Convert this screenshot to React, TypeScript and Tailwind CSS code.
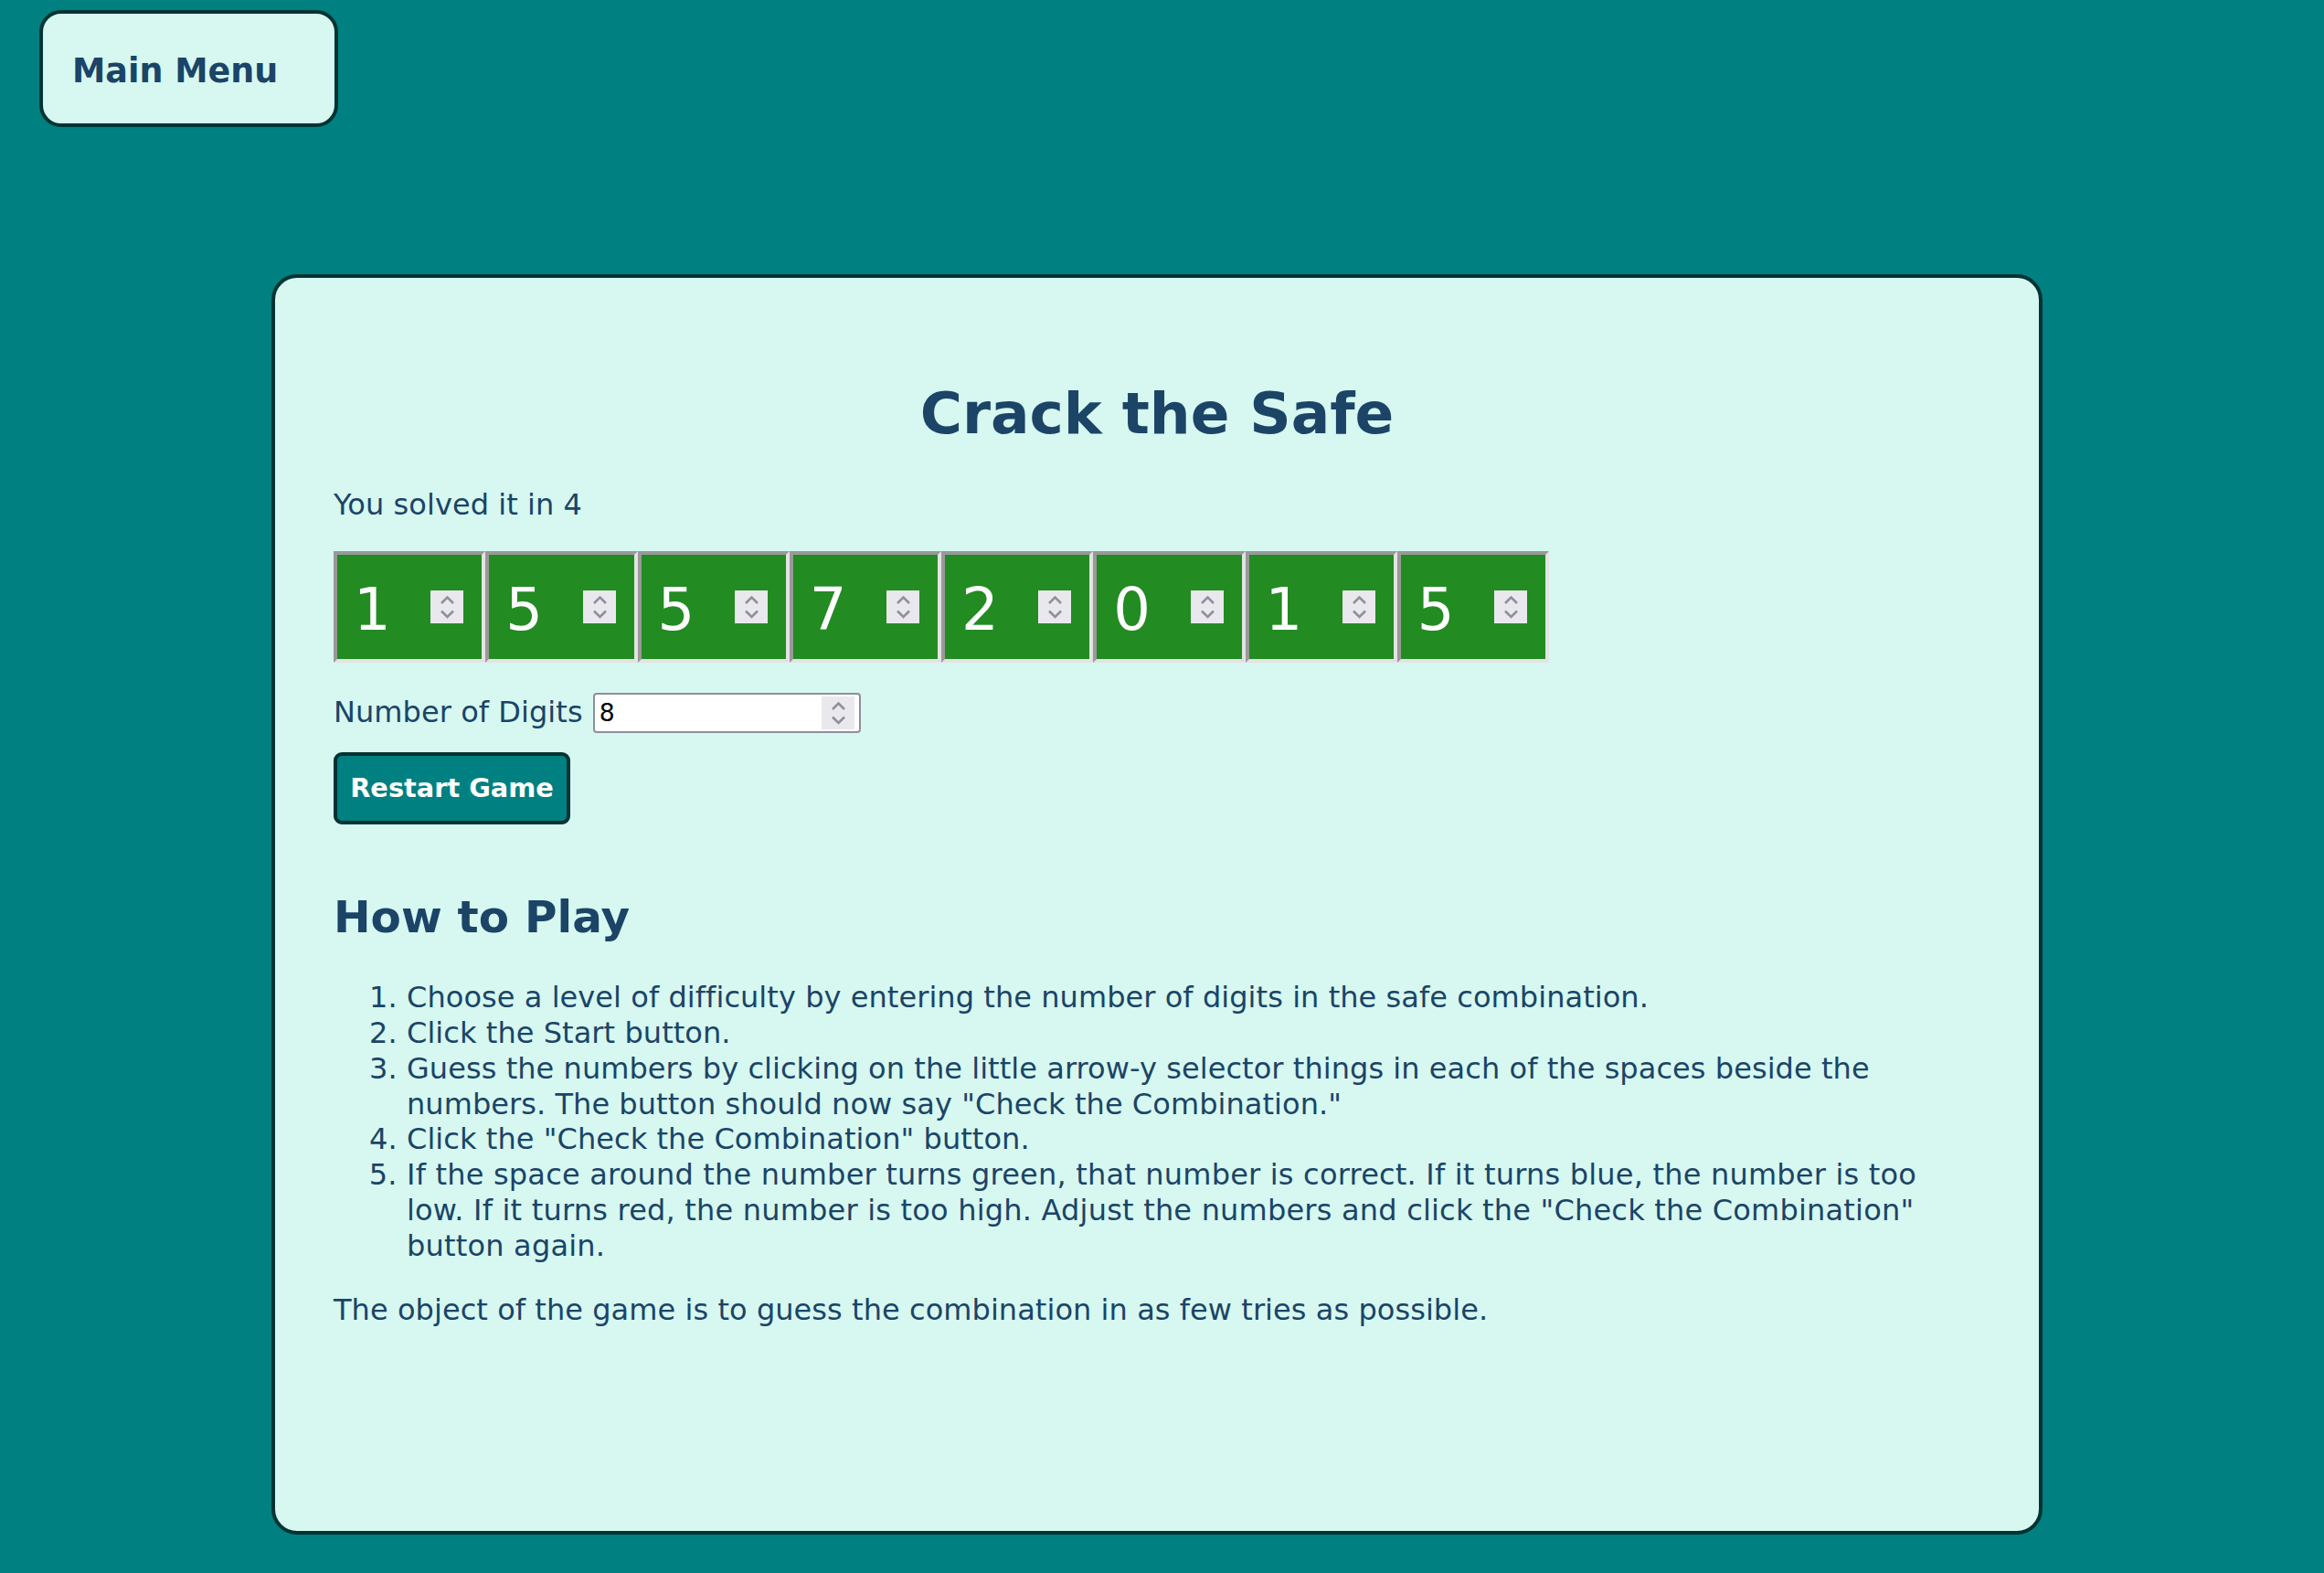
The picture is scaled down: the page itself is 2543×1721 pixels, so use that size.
const digits = [1, 5, 5, 7, 2, 0, 1, 5];

const steps = [
  "Choose a level of difficulty by entering the number of digits in the safe combination.",
  "Click the Start button.",
  'Guess the numbers by clicking on the little arrow-y selector things in each of the spaces beside the numbers. The button should now say "Check the Combination."',
  'Click the "Check the Combination" button.',
  'If the space around the number turns green, that number is correct. If it turns blue, the number is too low. If it turns red, the number is too high. Adjust the numbers and click the "Check the Combination" button again.',
];

function Spinner() {
  return (
    <div className="w-[36px] h-[36px] shrink-0 bg-[#e9e9ed]">
      <svg width="36" height="36" viewBox="0 0 36 36" fill="none">
        <path d="M12 14 L18.5 7.5 L25 14" stroke="#8f8f9d" strokeWidth="2.6" />
        <path d="M12 22.5 L18.5 29 L25 22.5" stroke="#8f8f9d" strokeWidth="2.6" />
      </svg>
    </div>
  );
}

function DigitBox({ value }: { value: number }) {
  return (
    <div className="w-[166.25px] h-[122px] bg-[#228b22] border-4 border-t-[#999999] border-l-[#999999] border-r-[#e3e3e3] border-b-[#e3e3e3] flex items-center pl-[18px] pr-[20px]">
      <span className="flex-1 text-white text-[64px] leading-[1.215] mt-[7px]">{value}</span>
      <Spinner />
    </div>
  );
}

export default function App() {
  return (
    <div className="min-h-screen bg-[#008080] pt-[11px] pb-[40px] font-['DejaVu_Sans',sans-serif] text-[#1b4467]">
      <button className="ml-[43px] w-[327px] h-[128px] bg-[#d6f8f1] border-4 border-[#003333] rounded-[24px] flex items-center pl-[32px] pt-[7px] text-[36.5px] leading-[1.215] font-bold text-[#1b4467]">
        Main Menu
      </button>

      <div className="ml-[297px] mt-[161px] w-[1938px] h-[1379px] bg-[#d6f8f1] border-4 border-[#003333] rounded-[28px] px-[64px] pt-[64px] text-[32px] leading-[38.9px] tracking-[0.06px]">
        <h1 className="mt-[47px] mb-[41px] text-center text-[63px] leading-[1.215] font-bold tracking-normal">
          Crack the Safe
        </h1>
        <p className="mb-[31.5px]">You solved it in 4</p>

        <div className="flex">
          {digits.map((d, i) => (
            <DigitBox key={i} value={d} />
          ))}
        </div>

        <div className="mt-[33px] flex items-center">
          <span>Number of Digits</span>
          <div className="ml-[11px] w-[293px] h-[44px] bg-white border-2 border-[#8f8f9d] rounded-[4px] flex items-center pl-[5px] pr-[5px]">
            <span className="flex-1 text-black text-[26.67px] leading-[1.215]">8</span>
            <Spinner />
          </div>
        </div>

        <button className="mt-[21px] w-[259px] h-[79px] bg-[#008080] border-4 border-[#003333] rounded-[9px] text-white font-bold text-[28.8px] leading-[1.215] tracking-normal">
          Restart Game
        </button>

        <h2 className="mt-[72px] mb-[39px] text-[48.5px] leading-[1.215] font-bold tracking-normal">How to Play</h2>

        <ol className="list-decimal pl-[80px] mr-[37px]">
          {steps.map((s, i) => (
            <li key={i} className={i === 4 ? "tracking-[0.2px]" : ""}>
              {s}
            </li>
          ))}
        </ol>

        <p className="mt-[31px]">The object of the game is to guess the combination in as few tries as possible.</p>
      </div>
    </div>
  );
}
